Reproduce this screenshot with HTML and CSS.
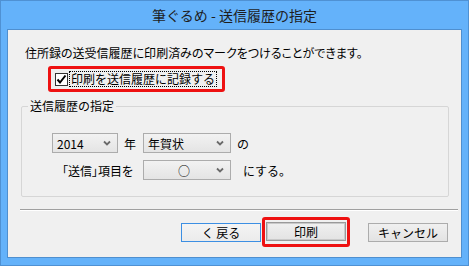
FILE: index.html
```html
<!DOCTYPE html>
<html lang="ja">
<head>
    <meta charset="UTF-8">
    <title>筆ぐるめ - 送信履歴の指定</title>
    <link rel="stylesheet" href="styles.css">
</head>
<body>
    <div class="window">
        <div class="titlebar">筆ぐるめ - 送信履歴の指定</div>
        <div class="client">
            <p class="intro">住所録の送受信履歴に印刷済みのマークをつけることができます。</p>
            <div class="mark">
                <span class="checkbox">
                    <svg width="11" height="11" viewBox="0 0 11 11"><path d="M1.5 5.5 L4 8.5 L9.5 1.5" fill="none" stroke="#000" stroke-width="2"/></svg>
                </span>
                <span class="check-label">印刷を送信履歴に記録する</span>
            </div>
            <fieldset class="group">
                <legend>送信履歴の指定</legend>
                <div class="rows">
                    <div class="year-cell">
                        <div class="select select-year">
                            <span>2014</span>
                            <svg class="chev" width="8" height="6" viewBox="0 0 8 6"><path d="M1 1.5 L4 4.5 L7 1.5" fill="none" stroke="#6a6a6a" stroke-width="1.8"/></svg>
                        </div>
                        <span>年</span>
                    </div>
                    <div class="select">
                        <span>年賀状</span>
                        <svg class="chev" width="8" height="6" viewBox="0 0 8 6"><path d="M1 1.5 L4 4.5 L7 1.5" fill="none" stroke="#6a6a6a" stroke-width="1.8"/></svg>
                    </div>
                    <span class="after after-no">の</span>

                    <span class="row-label">「送信」項目を</span>
                    <div class="select select-mark">
                        <span class="mark-value">○</span>
                        <svg class="chev" width="8" height="6" viewBox="0 0 8 6"><path d="M1 1.5 L4 4.5 L7 1.5" fill="none" stroke="#6a6a6a" stroke-width="1.8"/></svg>
                    </div>
                    <span class="after">にする。</span>
                </div>
            </fieldset>
            <div class="separator"></div>
            <div class="buttons">
                <button class="btn btn-back">く 戻る</button>
                <div class="highlight">
                    <button class="btn btn-default">印刷</button>
                </div>
                <button class="btn btn-cancel">キャンセル</button>
            </div>
        </div>
    </div>
</body>
</html>
```

FILE: styles.css
```css
body {
    margin: 0;
    font-family: "Noto Sans CJK JP", "Noto Sans", sans-serif;
    font-size: 12px;
    color: #000;
}
.window {
    width: 469px;
    height: 266px;
    box-sizing: border-box;
    background-color: #64b2fa;
    border: 1px solid #4f91d3;
}
.titlebar {
    height: 28px;
    line-height: 28px;
    text-align: center;
    font-size: 14px;
    color: #1e1e1e;
}
.client {
    margin: 0 6px;
    height: 229px;
    box-sizing: border-box;
    background-color: #f0f0f0;
    border: 1px solid #4f8fcf;
    padding-top: 15px;
}
.intro {
    margin: 0 0 0 17px;
    line-height: 16px;
    font-feature-settings: "palt";
}
.mark {
    display: inline-flex;
    align-items: center;
    gap: 2px;
    margin: 5px 0 0 40px;
    height: 20px;
    padding: 0 6px 0 4px;
    border: 3px solid #ee1111;
    border-radius: 3px;
}
.checkbox {
    width: 13px;
    height: 13px;
    box-sizing: border-box;
    border: 1px solid #333;
    background-color: #fff;
    display: flex;
    align-items: center;
    justify-content: center;
}
.check-label {
    line-height: 14px;
    outline: 1px dotted #000;
    padding: 0 1px;
}
.group {
    margin: 6px 12px 0 13px;
    padding: 19px 0 16px 0;
    border: 1px solid #d6d6d6;
    border-radius: 2px;
}
.group legend {
    margin-left: 6px;
    padding: 0 2px;
    line-height: 16px;
}
.rows {
    display: grid;
    grid-template-columns: 84px 88px auto;
    column-gap: 7px;
    row-gap: 7px;
    margin-left: 30px;
    align-items: center;
}
.year-cell {
    display: flex;
    align-items: center;
    justify-content: space-between;
}
.select {
    height: 20px;
    box-sizing: border-box;
    border: 1px solid #acacac;
    background: linear-gradient(#f2f2f2, #e4e4e4);
    display: flex;
    align-items: center;
    justify-content: space-between;
    padding: 0 6px 0 4px;
}
.select-year {
    width: 66px;
}
.select-mark .mark-value {
    flex: 1;
    text-align: center;
    padding-left: 4px;
}
.chev {
    flex: none;
}
.after {
    margin-left: 5px;
    white-space: nowrap;
}
.after-no {
    margin-left: -1px;
}
.row-label {
    text-align: right;
    padding-right: 3px;
    white-space: nowrap;
    font-feature-settings: "palt";
}
.separator {
    margin: 12px 3px 0 12px;
    border-top: 1px solid #a0a0a0;
    border-bottom: 1px solid #fff;
}
.buttons {
    display: flex;
    justify-content: flex-end;
    align-items: center;
    margin-top: 6px;
    padding-right: 13px;
}
.btn {
    width: 80px;
    height: 19px;
    padding: 0;
    font-family: inherit;
    font-size: 12px;
    color: #000;
    border: 1px solid #acacac;
    background: linear-gradient(#f0f0f0, #e3e3e3);
}
.btn-back {
    border-color: #3c8fe3;
    background: linear-gradient(#f4f4f4, #ebebeb);
    margin-right: 1px;
}
.highlight {
    padding: 2px 1px 3px 1px;
    border: 3px solid #ee1111;
    border-radius: 3px;
}
.btn-default {
    border: 1px solid #9a9a9a;
    box-shadow: inset 0 0 0 1px #c9c9c9;
}
.btn-cancel {
    margin-left: 18px;
}
```
